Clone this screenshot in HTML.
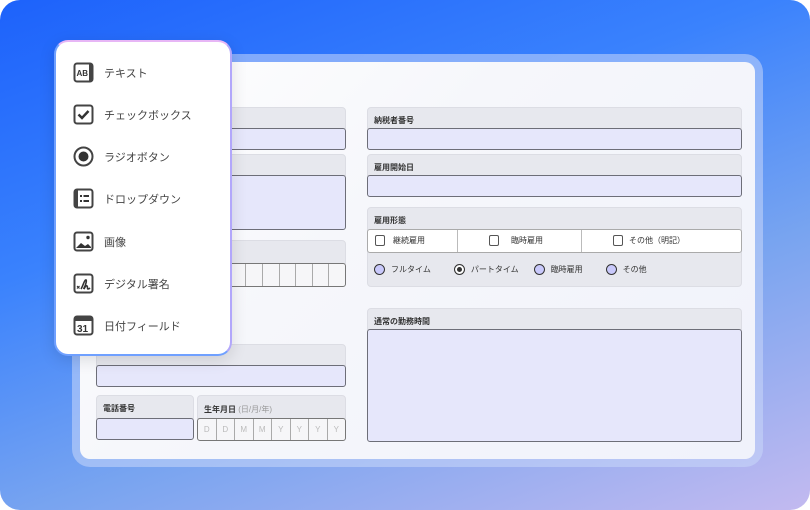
<!DOCTYPE html>
<html><head><meta charset="utf-8"><style>
*{box-sizing:border-box;margin:0;padding:0}
body{width:810px;height:510px;overflow:hidden;font-family:"Liberation Sans","Noto Sans CJK JP",sans-serif;}
.bg{position:absolute;left:0;top:0;width:810px;height:510px;border-radius:20px;background:linear-gradient(160deg,#1d62fb 0%,#3a82fd 35%,#78a4f0 65%,#c3baf0 100%);overflow:hidden}
.frame{position:absolute;left:72px;top:54px;width:691px;height:413px;border-radius:18px;background:rgba(200,215,250,.55)}
.card{position:absolute;left:80px;top:62px;width:675px;height:397px;border-radius:10px;background:linear-gradient(135deg,#fff 0%,#f6f7fb 40%,#f0f2fb 100%)}
.lab{position:absolute;background:#e7e8ee;border:1px solid #dcdde4;border-radius:4px 4px 0 0;font-size:8px;font-weight:bold;color:#333;padding:7px 0 0 6px}
.inp{position:absolute;background:#e6e7fb;border:1px solid #6d6e78;border-radius:3px}
.cells{position:absolute;display:flex;border:1px solid #777;border-radius:3px;background:#f6f6f8;overflow:hidden}
.cells div{flex:1;border-left:1px solid #aaa;font-size:8px;color:#bbb;text-align:center;line-height:22px}
.cells div:first-child{border-left:none}
.pop{position:absolute;left:54px;top:40px;width:178px;height:316px;border-radius:14px;background:#fff;border:2px solid #6fa0ff;border-top-color:#e7b6f6;border-right-color:#b2a7fb;box-shadow:0 4px 16px rgba(0,0,0,.12)}
.it{position:absolute;left:17px;font-size:11px;color:#444;display:flex;align-items:center}
.it svg{width:21px;height:21px;margin-right:10px}
.cb{display:inline-block;width:10px;height:11px;border:1px solid #555;border-radius:2px;vertical-align:middle;margin-right:12px}
.rd{display:inline-block;width:11px;height:11px;border:1.5px solid #333;border-radius:50%;background:#c9c9fb;vertical-align:middle;margin-right:6px}
</style></head><body>
<div class="bg">
<div class="frame"></div>
<div class="card"></div>
<div class="lab" style="left:96px;top:107px;width:250px;height:22px"></div>
<div class="inp" style="left:96px;top:128px;width:250px;height:22px"></div>
<div class="lab" style="left:96px;top:154px;width:250px;height:22px"></div>
<div class="inp" style="left:96px;top:175px;width:250px;height:55px"></div>
<div class="lab" style="left:96px;top:240px;width:250px;height:24px"></div>
<div class="cells" style="left:96px;top:263px;width:250px;height:24px"><div></div><div></div><div></div><div></div><div></div><div></div><div></div><div></div><div></div><div></div><div></div><div></div><div></div><div></div><div></div></div>
<div class="lab" style="left:96px;top:344px;width:250px;height:22px"></div>
<div class="inp" style="left:96px;top:365px;width:250px;height:22px"></div>
<div class="lab" style="left:96px;top:395px;width:98px;height:24px">電話番号</div>
<div class="inp" style="left:96px;top:418px;width:98px;height:22px"></div>
<div class="lab" style="left:197px;top:395px;width:149px;height:24px;padding-top:8px">生年月日 <span style="font-weight:normal;color:#999">(日/月/年)</span></div>
<div class="cells" style="left:197px;top:418px;width:149px;height:23px"><div>D</div><div>D</div><div>M</div><div>M</div><div>Y</div><div>Y</div><div>Y</div><div>Y</div></div>
<div class="lab" style="left:367px;top:107px;width:375px;height:22px">納税者番号</div>
<div class="inp" style="left:367px;top:128px;width:375px;height:22px"></div>
<div class="lab" style="left:367px;top:154px;width:375px;height:22px">雇用開始日</div>
<div class="inp" style="left:367px;top:175px;width:375px;height:22px"></div>
<div class="lab" style="left:367px;top:207px;width:375px;height:80px;border-radius:4px">雇用形態</div>
<div style="position:absolute;left:367px;top:229px;width:375px;height:24px;background:#fff;border:1px solid #aaa;border-radius:3px;font-size:8px;color:#333;display:flex">
 <div style="width:90px;border-right:1px solid #bbb;padding:5px 0 0 7px"><span class="cb" style="margin-right:8px"></span>継続雇用</div>
 <div style="width:124px;border-right:1px solid #bbb;padding:5px 0 0 31px"><span class="cb"></span>臨時雇用</div>
 <div style="flex:1;padding:5px 0 0 31px"><span class="cb" style="margin-right:6px"></span>その他（明記）</div>
</div>
<div style="position:absolute;left:374px;top:264px;font-size:8px;color:#333;white-space:nowrap">
 <span class="rd"></span>フルタイム<span style="display:inline-block;width:23px"></span><span class="rd" style="background:#fff;box-shadow:inset 0 0 0 2px #fff,inset 0 0 0 5px #333"></span>パートタイム<span style="display:inline-block;width:15px"></span><span class="rd"></span>臨時雇用<span style="display:inline-block;width:23px"></span><span class="rd"></span>その他
</div>
<div class="lab" style="left:367px;top:308px;width:375px;height:22px">通常の勤務時間</div>
<div class="inp" style="left:367px;top:329px;width:375px;height:113px"></div>
<div class="pop">
 <div class="it" style="top:20px"><svg viewBox="0 0 21 21"><rect x="1.5" y="1.5" width="18" height="18" rx="2.5" fill="#fff" stroke="#444" stroke-width="2"/><rect x="16" y="2" width="3" height="17" fill="#444"/><text x="3.5" y="14" font-size="8" font-weight="bold" fill="#333" font-family="Liberation Sans">AB</text></svg>テキスト</div>
 <div class="it" style="top:62px"><svg viewBox="0 0 21 21"><rect x="1.5" y="1.5" width="18" height="18" rx="2.5" fill="#fff" stroke="#444" stroke-width="2"/><path d="M5.5 10.5l3.5 3.5 6.5-7" stroke="#333" stroke-width="2.5" fill="none"/></svg>チェックボックス</div>
 <div class="it" style="top:104px"><svg viewBox="0 0 21 21"><circle cx="10.5" cy="10.5" r="9" fill="#fff" stroke="#444" stroke-width="2"/><circle cx="10.5" cy="10.5" r="5" fill="#333"/></svg>ラジオボタン</div>
 <div class="it" style="top:146px"><svg viewBox="0 0 21 21"><rect x="1.5" y="1.5" width="18" height="18" rx="2.5" fill="#fff" stroke="#444" stroke-width="2"/><rect x="2" y="2" width="3" height="17" fill="#444"/><rect x="7" y="7" width="2" height="2" fill="#333"/><rect x="7" y="12" width="2" height="2" fill="#333"/><rect x="10.5" y="7" width="5.5" height="2" fill="#333"/><rect x="10.5" y="12" width="5.5" height="2" fill="#333"/></svg>ドロップダウン</div>
 <div class="it" style="top:189px"><svg viewBox="0 0 21 21"><rect x="1.5" y="1.5" width="18" height="18" rx="2.5" fill="#fff" stroke="#444" stroke-width="2"/><path d="M3 17l5-5 4 3 3-2 3 3v1H3z" fill="#333"/><circle cx="15" cy="6.5" r="1.7" fill="#333"/></svg>画像</div>
 <div class="it" style="top:231px"><svg viewBox="0 0 21 21"><rect x="1.5" y="1.5" width="18" height="18" rx="2.5" fill="#fff" stroke="#444" stroke-width="2"/><path d="M4 13l2.5 2.5M6.5 13L4 15.5" stroke="#333" stroke-width="1.2"/><path d="M8 16c2-3 3-8 4.5-9s1 4-2 9M11 16c1-2 2-4 3-3s0 3 1 3 2-1 2-1" stroke="#333" stroke-width="1.6" fill="none"/></svg>デジタル署名</div>
 <div class="it" style="top:273px"><svg viewBox="0 0 21 21"><rect x="1.5" y="1.5" width="18" height="18" rx="2.5" fill="#fff" stroke="#444" stroke-width="2"/><rect x="2" y="2" width="17" height="4" fill="#444"/><text x="4" y="17" font-size="10" font-weight="bold" fill="#333" font-family="Liberation Sans">31</text></svg>日付フィールド</div>
</div>
</div>
</body></html>
